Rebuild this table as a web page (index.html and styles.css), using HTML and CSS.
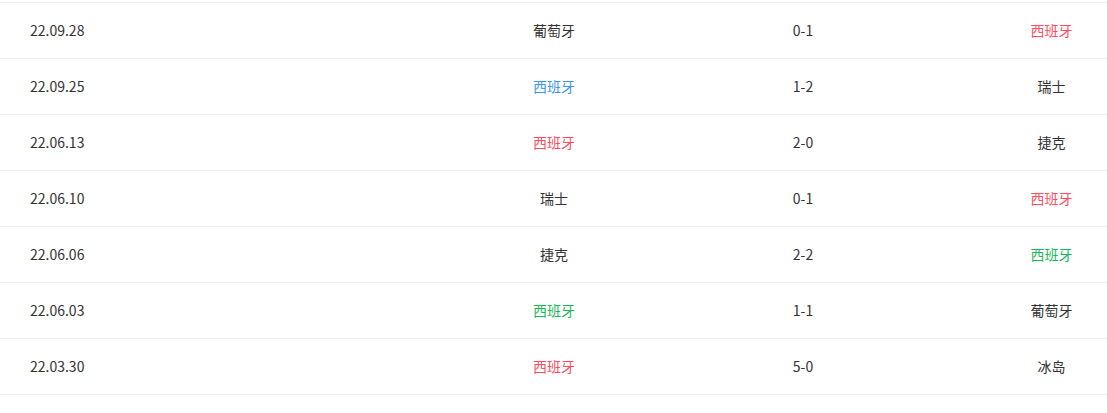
FILE: index.html
```html
<!DOCTYPE html>
<html lang="zh">
<head>
<meta charset="utf-8">
<link rel="stylesheet" href="styles.css">
</head>
<body>
<div class="list">
  <div class="row"><span class="date">22.09.28</span><span class="team">葡萄牙</span><span class="score">0-1</span><span class="team red">西班牙</span></div>
  <div class="row"><span class="date">22.09.25</span><span class="team blue">西班牙</span><span class="score">1-2</span><span class="team">瑞士</span></div>
  <div class="row"><span class="date">22.06.13</span><span class="team red">西班牙</span><span class="score">2-0</span><span class="team">捷克</span></div>
  <div class="row"><span class="date">22.06.10</span><span class="team">瑞士</span><span class="score">0-1</span><span class="team red">西班牙</span></div>
  <div class="row"><span class="date">22.06.06</span><span class="team">捷克</span><span class="score">2-2</span><span class="team green">西班牙</span></div>
  <div class="row"><span class="date">22.06.03</span><span class="team green">西班牙</span><span class="score">1-1</span><span class="team">葡萄牙</span></div>
  <div class="row"><span class="date">22.03.30</span><span class="team red">西班牙</span><span class="score">5-0</span><span class="team">冰岛</span></div>
</div>
</body>
</html>
```
FILE: styles.css
```css
html, body {
  margin: 0;
  padding: 0;
  background: #fff;
}
body {
  font-family: "Noto Sans CJK SC", "Noto Sans", sans-serif;
  font-size: 14px;
  color: #333;
}
.list {
  margin-top: 2px;
  border-top: 1px solid #f0f0f0;
}
.row {
  box-sizing: border-box;
  display: grid;
  grid-template-columns: 498px 112px 386px 111px;
  align-items: center;
  height: 56px;
  padding-bottom: 2px;
  border-bottom: 1px solid #f0f0f0;
}
.date {
  padding-left: 30px;
}
.team, .score {
  text-align: center;
}
.red { color: #ff4d5e; }
.blue { color: #3d95ee; }
.green { color: #17b85a; }
```
